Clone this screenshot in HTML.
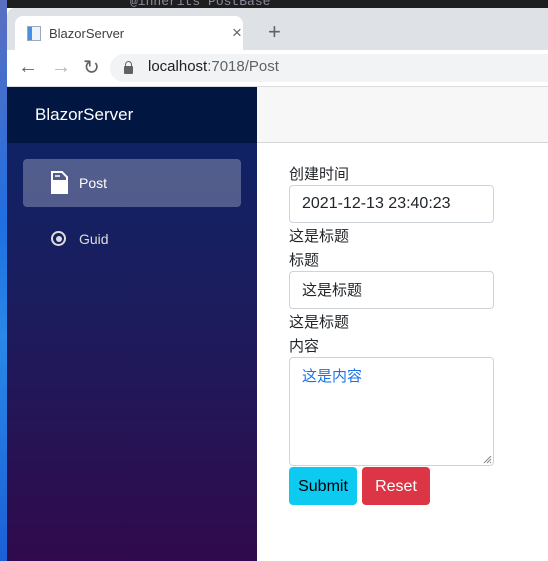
<!DOCTYPE html>
<html><head><meta charset="utf-8"><style>
*{box-sizing:border-box;margin:0;padding:0}
body{width:548px;height:561px;overflow:hidden;position:relative;font-family:"Liberation Sans","Noto Sans CJK SC",sans-serif;background:#fff}
.abs{position:absolute}
.cjk{font-family:"Liberation Sans","Noto Sans CJK SC",sans-serif}
</style></head><body>
<div class="abs" style="left:0;top:0;width:548px;height:8px;background:#1e1e1e"></div>
<div class="abs" style="left:0;top:0;width:7px;height:561px;background:linear-gradient(#5a6fc0,#1f6fe0 40%,#2a88e8 60%,#1b5fd6)"></div>
<div class="abs" style="left:130px;top:-6px;font:13px 'Liberation Mono',monospace;color:#8a8aa0">@inherits PostBase</div>
<div class="abs" style="left:7px;top:8px;width:541px;height:42px;background:#dee1e6;border-radius:8px 0 0 0"></div>
<div class="abs" style="left:15px;top:16px;width:228px;height:36px;background:#fff;border-radius:8px 8px 0 0"></div>
<div class="abs" style="left:27px;top:26px;width:14px;height:15px;border:1px solid #9ab;background:#eef3fa"></div>
<div class="abs" style="left:28px;top:27px;width:4px;height:13px;background:#4a90e2"></div>
<div class="abs" style="left:49px;top:26px;font-size:13px;color:#3c4043">BlazorServer</div>
<div class="abs" style="left:232px;top:23px;font-size:17px;color:#5f6368">×</div>
<div class="abs" style="left:268px;top:19px;font-size:22px;color:#5f6368">+</div>
<div class="abs" style="left:7px;top:50px;width:541px;height:37px;background:#fff;border-bottom:1px solid #dadce0"></div>
<div class="abs" style="left:18px;top:56px;font-size:20px;color:#5f6368">←</div>
<div class="abs" style="left:51px;top:56px;font-size:20px;color:#b6b6c6">→</div>
<div class="abs" style="left:83px;top:55px;font-size:20px;color:#5f6368">↻</div>
<div class="abs" style="left:110px;top:54px;width:460px;height:28px;background:#f1f3f4;border-radius:14px"></div>
<div class="abs" style="left:124px;top:66px;width:9px;height:8px;background:#5f6368;border-radius:1px"></div>
<div class="abs" style="left:125px;top:61px;width:7px;height:7px;border:1.5px solid #5f6368;border-bottom:none;border-radius:4px 4px 0 0"></div>
<div class="abs" style="left:148px;top:58px;font-size:15px;color:#202124">localhost<span style="color:#5f6368">:7018/Post</span></div>
<div class="abs" style="left:7px;top:87px;width:250px;height:474px;background:linear-gradient(180deg,#0b2466 0%,#1b1d5e 45%,#300a4c 100%)"></div>
<div class="abs" style="left:7px;top:87px;width:250px;height:56px;background:#011640"></div>
<div class="abs" style="left:35px;top:105px;font-size:17px;color:#fff">BlazorServer</div>
<div class="abs" style="left:257px;top:87px;width:291px;height:56px;background:#f7f7f7;border-bottom:1px solid #d6d5d5"></div>
<div class="abs" style="left:23px;top:159px;width:218px;height:48px;background:rgba(255,255,255,0.27);border-radius:4px"></div>
<svg class="abs" style="left:50px;top:171px" width="20" height="24" viewBox="0 0 20 24"><path d="M2 1h10l5 5v16H2z" fill="none" stroke="#fff" stroke-width="2"/><rect x="3" y="9" width="13" height="12" fill="#fff"/><path d="M5 5h5" stroke="#fff" stroke-width="1.5"/></svg>
<div class="abs" style="left:79px;top:175px;font-size:14px;color:#fff">Post</div>
<div class="abs" style="left:51px;top:231px;width:15px;height:15px;border:2px solid #ddd;border-radius:50%"></div>
<div class="abs" style="left:55.5px;top:235.5px;width:6px;height:6px;background:#ddd;border-radius:50%"></div>
<div class="abs" style="left:79px;top:231px;font-size:14px;color:#ddd">Guid</div>
<div class="abs cjk" style="left:289px;top:163px;font-size:15px;color:#212529">创建时间</div>
<div class="abs" style="left:289px;top:185px;width:205px;height:38px;border:1px solid #ced4da;border-radius:4px;padding:9px 12px;font-size:16px;color:#212529">2021-12-13 23:40:23</div>
<div class="abs cjk" style="left:289px;top:225px;font-size:15px;color:#212529">这是标题</div>
<div class="abs cjk" style="left:289px;top:249px;font-size:15px;color:#212529">标题</div>
<div class="abs cjk" style="left:289px;top:271px;width:205px;height:38px;border:1px solid #ced4da;border-radius:4px;padding:9px 12px;font-size:15px;color:#212529;line-height:20px">这是标题</div>
<div class="abs cjk" style="left:289px;top:311px;font-size:15px;color:#212529">这是标题</div>
<div class="abs cjk" style="left:289px;top:335px;font-size:15px;color:#212529">内容</div>
<div class="abs cjk" style="left:289px;top:357px;width:205px;height:109px;border:1px solid #ced4da;border-radius:4px;padding:9px 12px;font-size:15px;color:#1a73e8;line-height:20px">这是内容</div>
<svg class="abs" style="left:483px;top:455px" width="9" height="9"><path d="M8 1L1 8M8 4L4 8M8 7L7 8" stroke="#888" stroke-width="1"/></svg>
<div class="abs" style="left:289px;top:467px;width:68px;height:38px;background:#0dcaf0;border-radius:4px;font-size:16px;color:#000;text-align:center;line-height:40px">Submit</div>
<div class="abs" style="left:362px;top:467px;width:68px;height:38px;background:#dc3545;border-radius:4px;font-size:16px;color:#fff;text-align:center;line-height:40px">Reset</div>
</body></html>
